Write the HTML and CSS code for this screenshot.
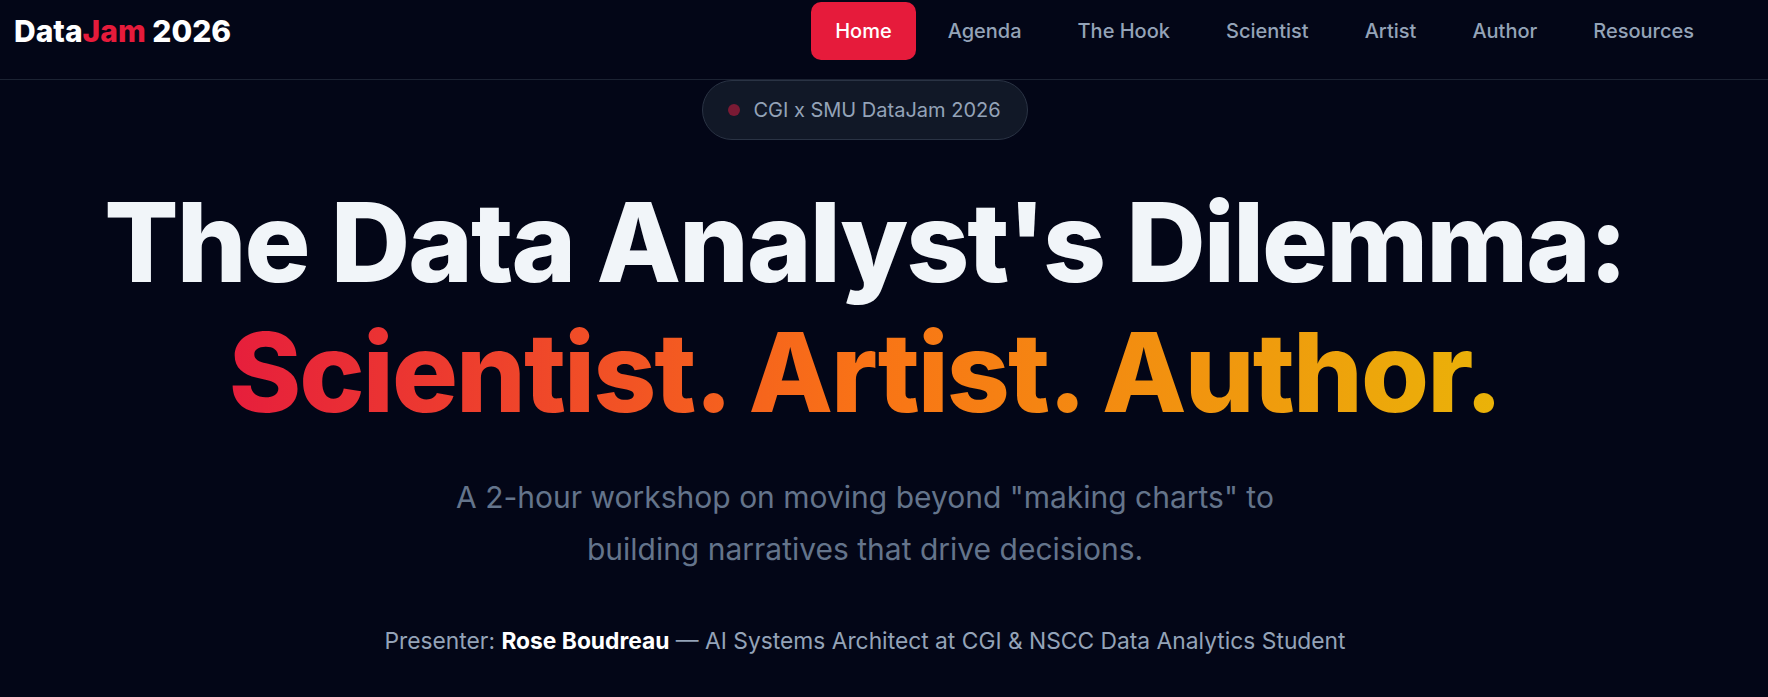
FILE: index.html
```html
<!DOCTYPE html>
<html lang="en">
<head>
<meta charset="utf-8">
<title>DataJam 2026 — The Data Analyst's Dilemma</title>
<link rel="stylesheet" href="styles.css">
</head>
<body>
  <header class="site-header">
    <a class="logo" href="#">Data<span class="logo-accent">Jam</span> 2026</a>
    <nav class="nav">
      <a class="nav-link active" href="#">Home</a>
      <a class="nav-link" href="#">Agenda</a>
      <a class="nav-link" href="#">The Hook</a>
      <a class="nav-link" href="#">Scientist</a>
      <a class="nav-link" href="#">Artist</a>
      <a class="nav-link" href="#">Author</a>
      <a class="nav-link" href="#">Resources</a>
    </nav>
  </header>
  <main class="hero">
    <div class="badge"><span class="badge-dot"></span>CGI x SMU DataJam 2026</div>
    <h1 class="title">
      <span class="title-line">The Data Analyst's Dilemma:</span>
      <span class="title-gradient">Scientist. Artist. Author.</span>
    </h1>
    <p class="subtitle">A 2-hour workshop on moving beyond "making charts" to building narratives that drive decisions.</p>
    <p class="presenter">Presenter: <strong>Rose Boudreau</strong> — AI Systems Architect at CGI &amp; NSCC Data Analytics Student</p>
  </main>
</body>
</html>
```
FILE: styles.css
```css
* { box-sizing: border-box; }
html, body {
  margin: 0;
  background: #030617;
  font-family: Inter, "Noto Sans", sans-serif;
  color: #f1f5f9;
}
.site-header {
  display: flex;
  justify-content: space-between;
  align-items: center;
  padding: 2px 50px 19px 14px;
  border-bottom: 1px solid #1c2333;
}
.logo {
  font-size: 30px;
  font-weight: 800;
  color: #ffffff;
  text-decoration: none;
}
.logo-accent { color: #e61b3b; }
.nav {
  display: flex;
  gap: 8px;
}
.nav-link {
  display: block;
  padding: 14px 24px;
  font-size: 20px;
  line-height: 30px;
  font-weight: 500;
  color: #94a3b8;
  text-decoration: none;
  border-radius: 10px;
}
.nav-link.active {
  background: #e61b3b;
  color: #ffffff;
}
.hero {
  display: flex;
  flex-direction: column;
  align-items: center;
  text-align: center;
  padding-right: 38px;
}
.badge {
  display: flex;
  align-items: center;
  gap: 13px;
  height: 60px;
  padding: 0 26px 0 25px;
  border: 1px solid #2a3344;
  border-radius: 999px;
  background: #111827;
  color: #94a3b8;
  font-size: 20px;
}
.badge-dot {
  width: 12px;
  height: 12px;
  border-radius: 50%;
  background: #7a1a34;
}
.title {
  margin: 37px 0 0;
  font-size: 110px;
  line-height: 130px;
  font-weight: 800;
  letter-spacing: -0.018em;
  color: #f1f5f9;
}
.title-line { display: block; }
.title-gradient {
  display: inline-block;
  background: linear-gradient(90deg, #e61e3c 0%, #f97316 50%, #eab308 100%);
  -webkit-background-clip: text;
  background-clip: text;
  color: transparent;
}
.subtitle {
  margin: 34px 0 0;
  max-width: 880px;
  font-size: 30px;
  line-height: 52px;
  color: #64748b;
}
.presenter {
  margin: 49px 0 0;
  font-size: 22.8px;
  line-height: 1.5;
  color: #94a3b8;
}
.presenter strong {
  color: #ffffff;
  font-weight: 700;
}
```
